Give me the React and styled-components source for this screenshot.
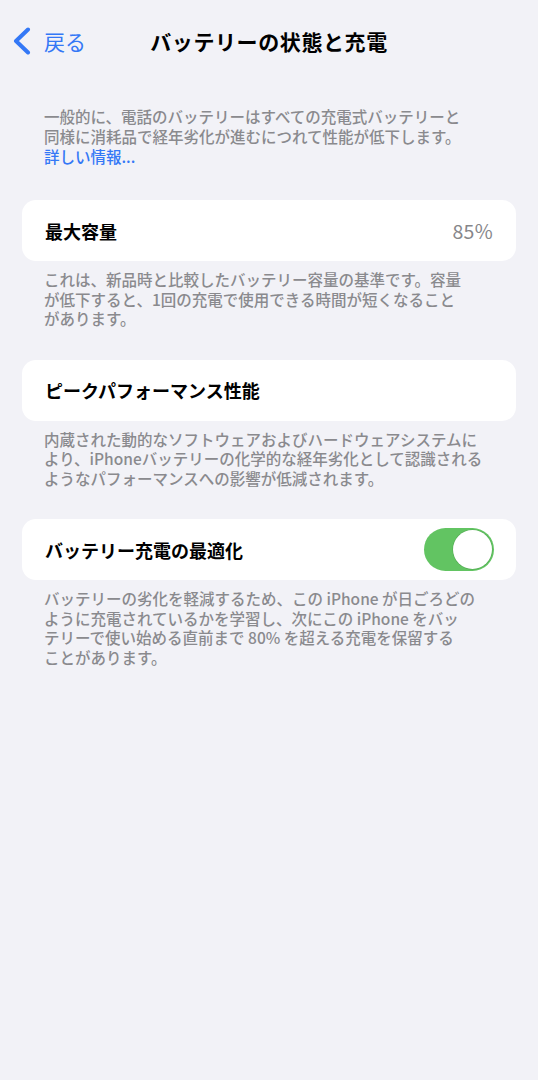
import React from 'react';
import styled, { createGlobalStyle } from 'styled-components';

const GlobalStyle = createGlobalStyle`
  html, body {
    margin: 0;
    padding: 0;
    background: #f2f2f7;
  }
  body {
    font-family: "Noto Sans CJK JP", "Noto Sans", sans-serif;
    -webkit-font-smoothing: antialiased;
  }
`;

const Page = styled.div`
  min-height: 1080px;
  background: #f2f2f7;
`;

const NavBar = styled.header`
  height: 82px;
  display: grid;
  grid-template-columns: 1fr auto 1fr;
  align-items: center;
  padding: 0 12px;
`;

const BackButton = styled.button`
  display: flex;
  align-items: center;
  gap: 12px;
  padding: 0;
  border: none;
  background: none;
  color: #3478f6;
  font-family: inherit;
  font-size: 21px;
  line-height: 26px;
  cursor: pointer;
  justify-self: start;
`;

const NavTitle = styled.h1`
  margin: 0;
  font-size: 21px;
  line-height: 26px;
  font-weight: 700;
  color: #000;
  letter-spacing: 0.6px;
`;

const Intro = styled.p`
  margin: 24px 0 0;
  padding: 0 20px 0 44px;
  font-size: 15.5px;
  line-height: 20px;
  font-weight: 500;
  color: #8a8a8e;
`;

const MoreLink = styled.a`
  color: #3478f6;
  text-decoration: none;
  font-weight: 500;
`;

const Section = styled.section`
  margin-top: ${(p) => p.$top}px;
`;

const Card = styled.div`
  margin: 0 22px;
  height: 61px;
  background: #fff;
  border-radius: 14px;
  padding: 0 22px 0 23px;
  display: flex;
  align-items: center;
  justify-content: space-between;
`;

const Label = styled.span`
  font-size: 18px;
  font-weight: 700;
  color: #000;
`;

const Value = styled.span`
  font-size: 19.5px;
  color: #86868a;
  margin-right: 1px;
  letter-spacing: 0.3px;
`;

const Footer = styled.p`
  margin: 9px 0 0;
  padding: 0 20px 0 44px;
  font-size: 15.5px;
  line-height: 19.5px;
  font-weight: 500;
  color: #8a8a8e;
`;

const Toggle = styled.span`
  width: 70px;
  height: 43px;
  border-radius: 22px;
  background: ${(p) => (p.$on ? '#62c462' : '#e9e9ea')};
  display: flex;
  align-items: center;
  justify-content: ${(p) => (p.$on ? 'flex-end' : 'flex-start')};
  padding: 0 2px;
  box-sizing: border-box;
`;

const Knob = styled.span`
  width: 39px;
  height: 39px;
  border-radius: 50%;
  background: #fff;
  box-shadow: 0 0 0 0.5px rgba(60, 140, 60, 0.5);
`;

function Chevron() {
  return (
    <svg width="20" height="28" viewBox="0 0 20 28">
      <polyline
        points="16,2.5 4,14 16,25.5"
        fill="none"
        stroke="#3478f6"
        strokeWidth="4"
        strokeLinecap="round"
        strokeLinejoin="round"
      />
    </svg>
  );
}

function App() {
  return (
    <Page>
      <GlobalStyle />
      <NavBar>
        <BackButton>
          <Chevron />
          戻る
        </BackButton>
        <NavTitle>バッテリーの状態と充電</NavTitle>
        <span />
      </NavBar>

      <Intro>
        一般的に、電話のバッテリーはすべての充電式バッテリーと<br />
        同様に消耗品で経年劣化が進むにつれて性能が低下します。<br />
        <MoreLink href="#">詳しい情報...</MoreLink>
      </Intro>

      <Section $top={34}>
        <Card>
          <Label>最大容量</Label>
          <Value>85%</Value>
        </Card>
        <Footer>
          これは、新品時と比較したバッテリー容量の基準です。容量<br />
          が低下すると、1回の充電で使用できる時間が短くなること<br />
          があります。
        </Footer>
      </Section>

      <Section $top={31}>
        <Card>
          <Label>ピークパフォーマンス性能</Label>
        </Card>
        <Footer>
          内蔵された動的なソフトウェアおよびハードウェアシステムに<br />
          より、iPhoneバッテリーの化学的な経年劣化として認識される<br />
          ようなパフォーマンスへの影響が低減されます。
        </Footer>
      </Section>

      <Section $top={31}>
        <Card>
          <Label>バッテリー充電の最適化</Label>
          <Toggle $on>
            <Knob />
          </Toggle>
        </Card>
        <Footer>
          バッテリーの劣化を軽減するため、この iPhone が日ごろどの<br />
          ように充電されているかを学習し、次にこの iPhone をバッ<br />
          テリーで使い始める直前まで 80% を超える充電を保留する<br />
          ことがあります。
        </Footer>
      </Section>
    </Page>
  );
}

export default App;
